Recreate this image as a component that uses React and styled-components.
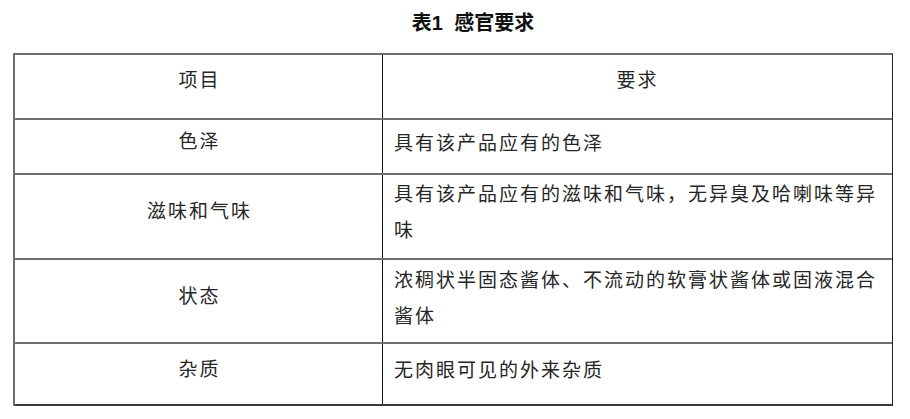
import React from 'react';
import styled, { createGlobalStyle } from 'styled-components';

const GlobalStyle = createGlobalStyle`
    html, body {
        margin: 0;
        padding: 0;
        background: #fff;
    }
    body {
        font-family: "Noto Sans CJK SC", "Liberation Sans", sans-serif;
        color: #222;
    }
`

const Page = styled.div`
    width: 910px;
    height: 419px;
    padding: 0 17px 0 13px;
    box-sizing: border-box;
`

const Title = styled.h1`
    margin: 0;
    height: 53px;
    padding: 12px 0 0 40px;
    box-sizing: border-box;
    text-align: center;
    font-family: "Liberation Sans", "Noto Sans CJK SC", sans-serif;
    font-size: 20px;
    line-height: 22px;
    font-weight: 700;
    color: #111;
    word-spacing: 6px;
`

const Table = styled.div`
    width: 880px;
    border-top: 2px solid #6f6f6f;
    border-left: 2px solid #6f6f6f;
    border-right: 1px solid #222;
    box-sizing: border-box;
`

const Row = styled.div`
    display: grid;
    grid-template-columns: 368px 1fr;
    height: ${props => props.height}px;
    box-sizing: border-box;
    border-bottom: 2px solid ${props => props.last ? '#3a3a3a' : '#6f6f6f'};
`

const Cell = styled.div`
    font-size: 19px;
    letter-spacing: 2px;
    line-height: 36px;
    color: #262626;
`

const NameCell = styled(Cell)`
    display: flex;
    align-items: center;
    justify-content: center;
    padding-bottom: ${props => props.header ? 16 : 13}px;
    padding-left: 2px;
    border-right: 1px solid #111;
`

const ValueCell = styled(Cell)`
    padding: ${props => props.pad}px 8px 0 11px;
    text-align: ${props => props.center ? 'center' : 'left'};
    ${props => props.center && `
        display: flex;
        align-items: center;
        justify-content: center;
        padding: 0 0 16px 0;
    `}
`

const rows = [
    { name: '色泽', value: '具有该产品应有的色泽', height: 55, pad: 4 },
    { name: '滋味和气味', value: '具有该产品应有的滋味和气味，无异臭及哈喇味等异味', height: 85, pad: 0 },
    { name: '状态', value: '浓稠状半固态酱体、不流动的软膏状酱体或固液混合酱体', height: 84, pad: 1 },
    { name: '杂质', value: '无肉眼可见的外来杂质', height: 62, pad: 7 }
]

export default function App() {
    return (
        <Page>
            <GlobalStyle />
            <Title>表1 感官要求</Title>
            <Table>
                <Row height={65}>
                    <NameCell header>项目</NameCell>
                    <ValueCell center>要求</ValueCell>
                </Row>
                {rows.map((row, index) => (
                    <Row key={row.name} height={row.height} last={index === rows.length - 1}>
                        <NameCell>{row.name}</NameCell>
                        <ValueCell pad={row.pad}>{row.value}</ValueCell>
                    </Row>
                ))}
            </Table>
        </Page>
    );
}
